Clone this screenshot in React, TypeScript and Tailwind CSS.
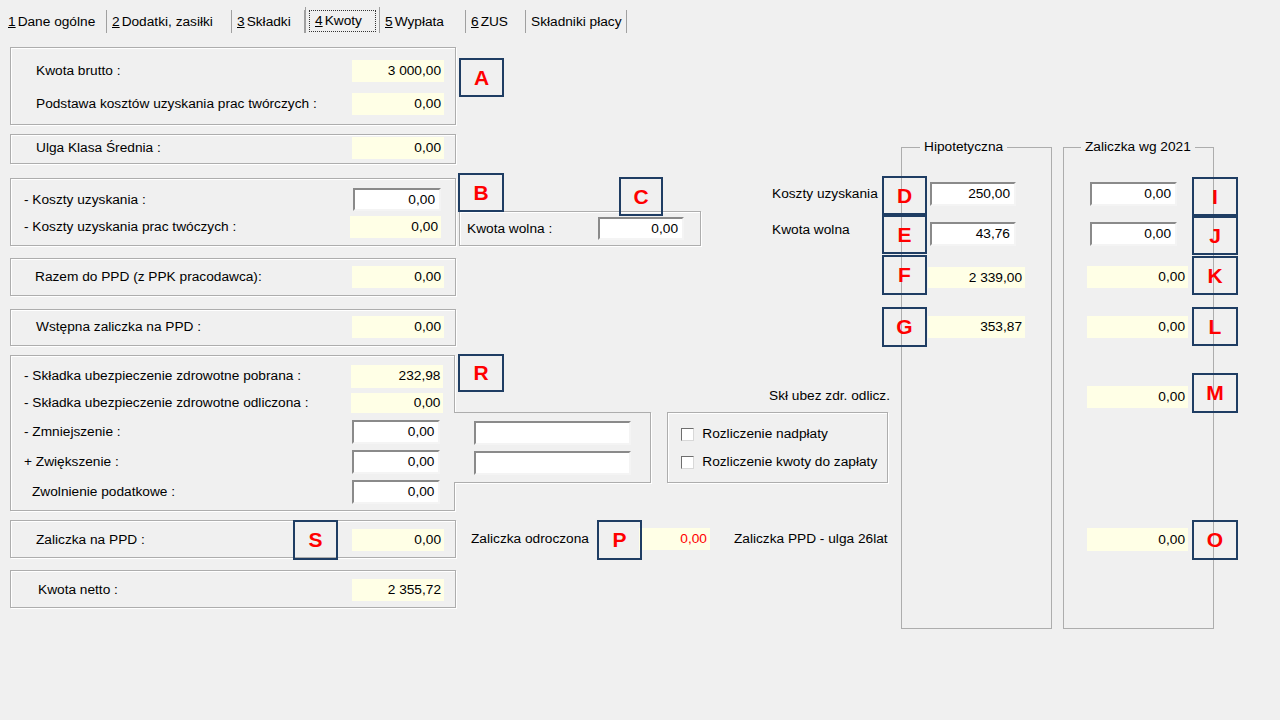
import type { ReactNode } from 'react';

const tabs = [
  { key: '1', label: 'Dane ogólne', w: 'w-[104px]' },
  { key: '2', label: 'Dodatki, zasiłki', w: 'w-[125px]' },
  { key: '3', label: 'Składki', w: 'w-[73px]' },
  { key: '4', label: 'Kwoty', w: 'w-[75px]', active: true },
  { key: '5', label: 'Wypłata', w: 'w-[86px]' },
  { key: '6', label: 'ZUS', w: 'w-[60px]' },
  { key: '', label: 'Składniki płacy', w: 'w-[101px]' },
];

const marks = [
  { l: 'A', pos: 'left-[459px] top-[58px] w-[45px] h-[39px]' },
  { l: 'B', pos: 'left-[458px] top-[173px] w-[46px] h-[39px]' },
  { l: 'C', pos: 'left-[619px] top-[177px] w-[44px] h-[39px]' },
  { l: 'D', pos: 'left-[882px] top-[176px] w-[45px] h-[39px]' },
  { l: 'E', pos: 'left-[882px] top-[215px] w-[45px] h-[39px]' },
  { l: 'F', pos: 'left-[882px] top-[255px] w-[45px] h-[40px]' },
  { l: 'G', pos: 'left-[882px] top-[307px] w-[45px] h-[40px]' },
  { l: 'I', pos: 'left-[1192px] top-[177px] w-[46px] h-[39px]' },
  { l: 'J', pos: 'left-[1192px] top-[216px] w-[46px] h-[39px]' },
  { l: 'K', pos: 'left-[1192px] top-[256px] w-[46px] h-[39px]' },
  { l: 'L', pos: 'left-[1192px] top-[307px] w-[46px] h-[39px]' },
  { l: 'M', pos: 'left-[1192px] top-[373px] w-[46px] h-[40px]' },
  { l: 'O', pos: 'left-[1192px] top-[520px] w-[46px] h-[40px]' },
  { l: 'R', pos: 'left-[458px] top-[354px] w-[46px] h-[38px]' },
  { l: 'S', pos: 'left-[293px] top-[520px] w-[45px] h-[40px]' },
  { l: 'P', pos: 'left-[597px] top-[520px] w-[45px] h-[40px]' },
];

const groupBox = 'border border-[#adadad] shadow-[inset_1px_1px_0_#ffffff,1px_1px_0_#ffffff]';
const sunken = 'bg-white border-2 border-t-[#8a8a8a] border-l-[#8a8a8a] border-b-[#f4f4f4] border-r-[#f4f4f4]';

function Yellow({ value, className = 'w-[92px] h-[22px]', red = false }: { value: string; className?: string; red?: boolean }) {
  return (
    <div className={'bg-[#ffffe6] text-right pr-[3px] flex items-center justify-end ' + className + (red ? ' text-[#ff0000]' : '')}>
      {value}
    </div>
  );
}

function Input({ value = '', className = 'w-[88px] h-[23px]' }: { value?: string; className?: string }) {
  return <div className={sunken + ' text-right pr-[4px] flex items-center justify-end ' + className}>{value}</div>;
}

function Row({ label, children, className = '' }: { label: string; children: ReactNode; className?: string }) {
  return (
    <div className={'flex items-center justify-between ' + className}>
      <span>{label}</span>
      {children}
    </div>
  );
}

function Check({ label }: { label: string }) {
  return (
    <div className="flex items-center h-[28px]">
      <span className="w-[13px] h-[13px] bg-white border border-t-[#6e6e6e] border-l-[#6e6e6e] border-b-[#d8d8d8] border-r-[#d8d8d8]" />
      <span className="ml-[8px]">{label}</span>
    </div>
  );
}

export default function App() {
  return (
    <div className="relative w-[1280px] h-[720px] overflow-hidden bg-[#f0f0f0] text-[13.7px] leading-[16px] text-black font-['Liberation_Sans',Arial,sans-serif]">
      {/* tab strip */}
      <div className="flex items-end h-[33px] pl-[3px]">
        {tabs.map((t) =>
          t.active ? (
            <div key={t.label} className={'h-[26px] px-[3px] pt-[3px] pb-[1px] border-x border-[#a0a0a0] ' + t.w}>
              <div className="h-full border border-dotted border-[#333] flex items-center pl-[5px]">
                <span className="underline">{t.key}</span>
                <span className="ml-[2px]">{t.label}</span>
              </div>
            </div>
          ) : (
            <div key={t.label} className={'h-[23px] flex items-center pl-[5px] border-r border-[#a0a0a0] ' + t.w}>
              {t.key && <span className="underline mr-[2px]">{t.key}</span>}
              <span>{t.label}</span>
            </div>
          )
        )}
      </div>

      <div className="flex pl-[10px]">
        {/* left part */}
        <div className="w-[880px] flex flex-col mt-[14px]">
          <div className={groupBox + ' w-[446px] h-[78px] pl-[25px] pr-[11px] pt-[12px] flex flex-col gap-[11px]'}>
            <Row label="Kwota brutto :">
              <Yellow value="3 000,00" />
            </Row>
            <Row label="Podstawa kosztów uzyskania prac twórczych :">
              <Yellow value="0,00" />
            </Row>
          </div>

          <div className={groupBox + ' mt-[9px] w-[446px] h-[30px] pl-[25px] pr-[11px] pt-[2px]'}>
            <Row label="Ulga Klasa Średnia :">
              <Yellow value="0,00" />
            </Row>
          </div>

          <div className="mt-[14px] flex items-start">
            <div className={groupBox + ' w-[446px] h-[68px] pl-[13px] pr-[14px] pt-[9px] flex flex-col gap-[5px]'}>
              <Row label="- Koszty uzyskania :">
                <Input value="0,00" />
              </Row>
              <Row label="- Koszty uzyskania prac twóczych :">
                <Yellow value="0,00" className="w-[91px] h-[22px]" />
              </Row>
            </div>
            <div className={groupBox + ' ml-[3px] mt-[33px] w-[242px] h-[35px] pl-[7px] pr-[16px] flex items-center justify-between'}>
              <span>Kwota wolna :</span>
              <Input value="0,00" className="w-[86px] h-[23px]" />
            </div>
            <div className="ml-[71px] mt-[8px] flex flex-col gap-[20px]">
              <span>Koszty uzyskania</span>
              <span>Kwota wolna</span>
            </div>
          </div>

          <div className={groupBox + ' mt-[12px] w-[446px] h-[38px] pl-[24px] pr-[11px] pt-[7px]'}>
            <Row label="Razem do PPD (z PPK pracodawca):">
              <Yellow value="0,00" />
            </Row>
          </div>

          <div className={groupBox + ' mt-[13px] w-[446px] h-[37px] pl-[25px] pr-[11px] pt-[6px]'}>
            <Row label="Wstępna zaliczka na PPD :">
              <Yellow value="0,00" />
            </Row>
          </div>

          <div className="mt-[9px] flex items-start">
            <div className={groupBox + ' w-[446px] h-[156px] pl-[13px] pr-[11px] pt-[7px] flex flex-col'}>
              <Row label="- Składka ubezpieczenie zdrowotne pobrana :" className="h-[26px]">
                <Yellow value="232,98" className="w-[92px] h-[23px]" />
              </Row>
              <Row label="- Składka ubezpieczenie zdrowotne odliczona :" className="h-[28px]">
                <Yellow value="0,00" className="w-[92px] h-[20px]" />
              </Row>
              <Row label="- Zmniejszenie :" className="h-[30px]">
                <Input value="0,00" className="w-[88px] h-[24px] mr-[3px]" />
              </Row>
              <Row label="+ Zwiększenie :" className="h-[30px]">
                <Input value="0,00" className="w-[88px] h-[24px] mr-[3px]" />
              </Row>
              <Row label="Zwolnienie podatkowe :" className="h-[30px] pl-[8px]">
                <Input value="0,00" className="w-[88px] h-[24px] mr-[3px]" />
              </Row>
            </div>
            <div className="relative z-10 -ml-[1px] mt-[57px] w-[197px] h-[71px] bg-[#f0f0f0] border-t border-r border-b border-[#adadad] shadow-[1px_1px_0_#ffffff] pl-[20px] pt-[8px] flex flex-col gap-[6px]">
              <Input className="w-[157px] h-[24px]" />
              <Input className="w-[157px] h-[24px]" />
            </div>
            <div className="ml-[16px] w-[223px] flex flex-col">
              <span className="mt-[33px] text-right">Skł ubez zdr. odlicz.</span>
              <div className={groupBox + ' mt-[8px] w-[221px] h-[71px] pl-[13px] pt-[7px] flex flex-col'}>
                <Check label="Rozliczenie nadpłaty" />
                <Check label="Rozliczenie kwoty do zapłaty" />
              </div>
            </div>
          </div>

          <div className="mt-[9px] flex items-center">
            <div className={groupBox + ' w-[446px] h-[38px] pl-[25px] pr-[11px] pt-[8px]'}>
              <Row label="Zaliczka na PPD :">
                <Yellow value="0,00" />
              </Row>
            </div>
            <span className="ml-[15px]">Zaliczka odroczona</span>
            <Yellow value="0,00" red className="ml-[50px] w-[71px] h-[22px]" />
            <span className="ml-[24px]">Zaliczka PPD - ulga 26lat</span>
          </div>

          <div className={groupBox + ' mt-[12px] w-[446px] h-[38px] pl-[27px] pr-[11px] pt-[8px]'}>
            <Row label="Kwota netto :">
              <Yellow value="2 355,72" />
            </Row>
          </div>
        </div>

        {/* right group boxes */}
        <fieldset className="ml-[11px] mt-[106px] w-[151px] h-[490px] border border-[#adadad] flex flex-col">
          <legend className="ml-[18px] px-[4px]">Hipotetyczna</legend>
          <div className="pl-[28px] flex flex-col items-start">
            <Input value="250,00" className="mt-[27px] w-[86px] h-[24px]" />
            <Input value="43,76" className="mt-[16px] w-[86px] h-[24px]" />
            <Yellow value="2 339,00" className="-ml-[2px] mt-[21px] w-[97px] h-[21px]" />
            <Yellow value="353,87" className="-ml-[2px] mt-[28px] w-[97px] h-[22px]" />
          </div>
        </fieldset>

        <fieldset className="ml-[11px] mt-[106px] w-[151px] h-[490px] border border-[#adadad] flex flex-col">
          <legend className="ml-[17px] px-[4px]">Zaliczka wg 2021</legend>
          <div className="pl-[26px] flex flex-col items-start">
            <Input value="0,00" className="mt-[27px] w-[87px] h-[24px]" />
            <Input value="0,00" className="mt-[16px] w-[87px] h-[24px]" />
            <Yellow value="0,00" className="-ml-[3px] mt-[20px] w-[101px] h-[22px]" />
            <Yellow value="0,00" className="-ml-[3px] mt-[28px] w-[101px] h-[22px]" />
            <Yellow value="0,00" className="-ml-[3px] mt-[48px] w-[101px] h-[22px]" />
            <Yellow value="0,00" className="-ml-[3px] mt-[120px] w-[101px] h-[23px]" />
          </div>
        </fieldset>
      </div>

      {/* annotation marks laid over the form */}
      {marks.map((m) => (
        <div
          key={m.l}
          className={'absolute flex items-center justify-center border-2 border-[#1f3d63] text-[#ff0000] text-[21px] font-bold ' + m.pos}
        >
          {m.l}
        </div>
      ))}
    </div>
  );
}
